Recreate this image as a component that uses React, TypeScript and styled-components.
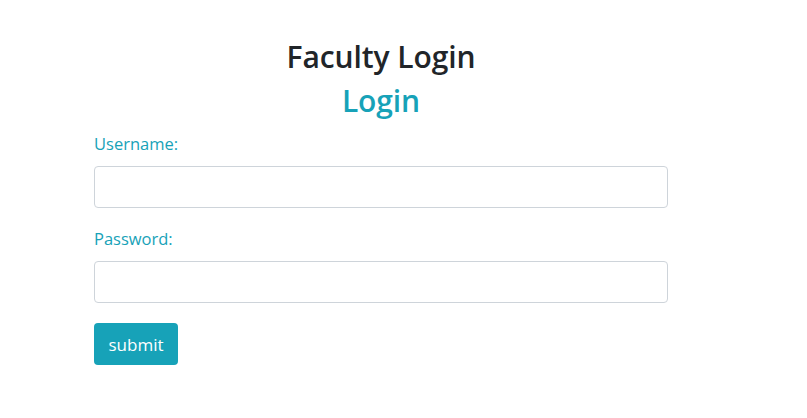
import React from "react";
import styled, { createGlobalStyle } from "styled-components";

const Global = createGlobalStyle`
  html, body { margin: 0; padding: 0; background: #fff; }
  body { font-family: "Open Sans", "Noto Sans", sans-serif; color: #212529; }
  * { box-sizing: border-box; }
`;

const Page = styled.div`
  width: 807px;
  height: 418px;
  padding: 35px 0 0 94px;
`;

const Panel = styled.form`
  width: 574px;
  display: flex;
  flex-direction: column;
`;

const Heading = styled.div`
  display: flex;
  flex-direction: column;
  margin-bottom: 10px;
`;

const Title = styled.h2<{ $accent?: boolean }>`
  margin: 0;
  text-align: center;
  font-size: 30px;
  font-weight: 600;
  line-height: 44px;
  color: ${(p) => (p.$accent ? "#17a2b8" : "#212529")};
  letter-spacing: -0.1px;
`;

const Field = styled.div`
  display: flex;
  flex-direction: column;
  gap: 11px;
  margin-bottom: 20px;
`;

const Label = styled.label`
  font-size: 16.5px;
  line-height: 22px;
  color: #17a2b8;
`;

const Input = styled.input`
  height: 42px;
  width: 100%;
  border: 1px solid #ced4da;
  border-radius: 4px;
  padding: 6px 12px;
  font-size: 16px;
  font-family: inherit;
  outline: none;
`;

const Submit = styled.button`
  align-self: flex-start;
  height: 42px;
  width: 84px;
  border: none;
  border-radius: 4px;
  background: #17a2b8;
  color: #fff;
  font-family: inherit;
  font-size: 17px;
  padding: 0;
`;

export default function App() {
  return (
    <>
      <Global />
      <Page>
        <Panel onSubmit={(e) => e.preventDefault()}>
          <Heading>
            <Title>Faculty Login</Title>
            <Title $accent>Login</Title>
          </Heading>
          <Field>
            <Label>Username:</Label>
            <Input type="text" />
          </Field>
          <Field>
            <Label>Password:</Label>
            <Input type="password" />
          </Field>
          <Submit type="submit">submit</Submit>
        </Panel>
      </Page>
    </>
  );
}
